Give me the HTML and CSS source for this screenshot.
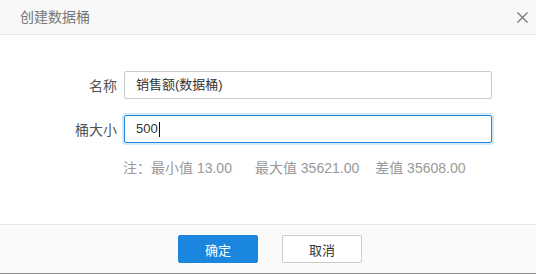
FILE: index.html
```html
<!DOCTYPE html>
<html lang="zh">
<head>
<meta charset="utf-8">
<title>创建数据桶</title>
<link rel="stylesheet" href="styles.css">
</head>
<body>
<div class="dialog">
  <div class="dialog-header">
    <span class="dialog-title">创建数据桶</span>
    <span class="dialog-close" aria-label="关闭">
      <svg width="11" height="11" viewBox="0 0 11 11"><path d="M0.5 0.5L10.5 10.5M10.5 0.5L0.5 10.5" stroke="#777" stroke-width="1.3" fill="none"/></svg>
    </span>
  </div>
  <div class="dialog-body">
    <div class="form-row">
      <label class="form-label">名称</label>
      <div class="field">销售额(数据桶)</div>
    </div>
    <div class="form-row">
      <label class="form-label">桶大小</label>
      <div class="field field-focus">500<span class="caret"></span></div>
    </div>
    <div class="note">
      <span class="note-min">注：最小值 13.00</span>
      <span class="note-max">最大值 35621.00</span>
      <span class="note-diff">差值 35608.00</span>
    </div>
  </div>
  <div class="dialog-footer">
    <button class="btn btn-primary">确定</button>
    <button class="btn btn-default">取消</button>
  </div>
</div>
</body>
</html>
```
FILE: styles.css
```css
html, body {
  margin: 0;
  padding: 0;
  background: #fff;
}
body {
  font-family: "Liberation Sans", "Noto Sans CJK SC", sans-serif;
  font-size: 13px;
  color: #333;
}
.dialog {
  width: 536px;
  height: 274px;
  display: flex;
  flex-direction: column;
  overflow: hidden;
}
.dialog-header {
  height: 35px;
  box-sizing: border-box;
  background: #f8f8f8;
  border-bottom: 1px solid #e6e6e6;
  display: flex;
  align-items: center;
  justify-content: space-between;
  padding: 0 7px 0 20px;
}
.dialog-title {
  font-size: 14px;
  color: #777;
  line-height: 20px;
}
.dialog-close {
  display: flex;
  width: 11px;
  height: 11px;
  padding: 1px;
  margin-top: 1px;
}
.dialog-body {
  flex: 1;
  padding-top: 36px;
  box-sizing: border-box;
}
.form-row {
  display: grid;
  grid-template-columns: 117px 368px;
  column-gap: 7px;
  align-items: center;
  margin-bottom: 16px;
}
.form-label {
  text-align: right;
  font-size: 14px;
  color: #555;
}
.field {
  height: 28px;
  box-sizing: border-box;
  border: 1px solid #ccc;
  border-radius: 2px;
  padding: 0 11px;
  line-height: 26px;
  font-size: 13px;
  color: #333;
  display: flex;
  align-items: center;
}
.field-focus {
  border-color: #1e86de;
  box-shadow: 0 0 0 2px rgba(30, 134, 222, 0.18);
}
.caret {
  display: inline-block;
  width: 1px;
  height: 15px;
  background: #111;
  margin-left: 1px;
}
.note {
  margin-top: -1px;
  padding-left: 123px;
  display: flex;
  color: #999;
  font-size: 14px;
  line-height: 20px;
}
.note-min {
  margin-right: 23px;
}
.note-max {
  margin-right: 16px;
}
.dialog-footer {
  height: 50px;
  box-sizing: border-box;
  background: #fafafa;
  border-top: 1px solid #e8e8e8;
  border-bottom: 1px solid #888;
  display: flex;
  justify-content: center;
  gap: 24px;
  padding: 10px 0 0 4px;
}
.btn {
  width: 80px;
  height: 28px;
  box-sizing: border-box;
  border-radius: 2px;
  font-family: inherit;
  font-size: 13px;
  cursor: pointer;
}
.btn-primary {
  background: #1a86de;
  border: 1px solid #1a86de;
  color: #fff;
}
.btn-default {
  background: #fff;
  border: 1px solid #ccc;
  color: #333;
}
```
